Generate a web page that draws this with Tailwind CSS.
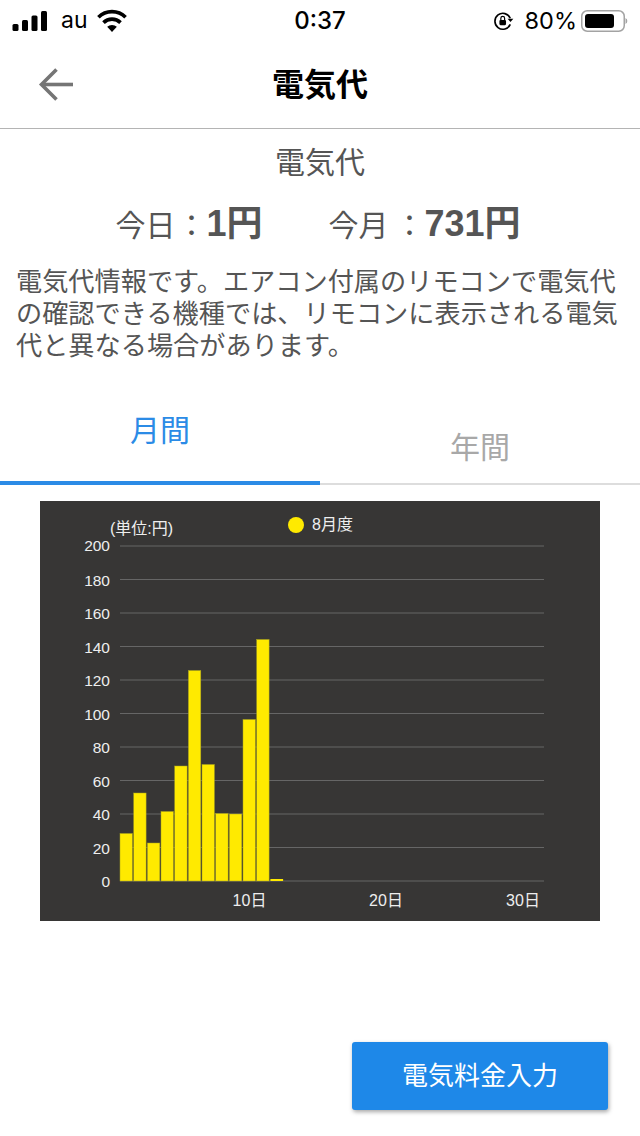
<!DOCTYPE html>
<html lang="ja">
<head>
  <meta charset="UTF-8">
  <meta name="viewport" content="width=device-width, initial-scale=1.0">
  <title>電気代</title>
  <script src="https://cdn.jsdelivr.net/npm/@tailwindcss/browser@4"></script>
</head>
<body class="bg-white font-['Liberation_Sans','Noto_Sans_CJK_JP',sans-serif]">
  <div class="w-[640px] h-[1136px] flex flex-col overflow-hidden relative">
    <!-- status bar -->
    <div class="h-[40px] pt-[1px] flex items-center justify-between pl-[12px] pr-[12px] text-black font-['Inter','Noto_Sans_CJK_JP',sans-serif]">
      <div class="w-[200px] flex items-center">
        <svg width="36" height="22" viewBox="0 0 36 22" fill="#000">
          <rect x="0.5" y="14" width="6" height="7" rx="1.5"/>
          <rect x="10" y="10" width="6" height="11" rx="1.5"/>
          <rect x="19.5" y="5.5" width="6" height="15.5" rx="1.5"/>
          <rect x="29" y="1" width="6" height="20" rx="1.5"/>
        </svg>
        <span class="ml-[13px] text-[23px] leading-none">au</span>
        <svg class="ml-[9px]" width="30" height="23" viewBox="0 0 26 20" fill="none" stroke="#000" stroke-width="3.2">
          <path d="M1.2 7.2a16.8 16.8 0 0 1 23.6 0"/>
          <path d="M5.6 11.8a10.6 10.6 0 0 1 14.8 0"/>
          <path d="M13 20l-4.2-4.5a6.2 6.2 0 0 1 8.4 0z" fill="#000" stroke="none"/>
        </svg>
      </div>
      <span class="text-[24px] font-medium leading-none">0:37</span>
      <div class="w-[200px] flex items-center justify-end">
        <svg width="21" height="20" viewBox="0 0 19 18" fill="none" stroke="#000" stroke-width="1.5">
          <path d="M15.6 6.5A7.2 7.2 0 1 0 15.6 12"/>
          <path d="M18.4 7l-2.6 3-2.6-3z" fill="#000" stroke="none"/>
          <rect x="5.8" y="8" width="6" height="4.8" rx="1" fill="#000" stroke="none"/>
          <path d="M7.1 8V6.6a1.7 1.7 0 0 1 3.4 0V8" stroke-width="1.1"/>
        </svg>
        <span class="ml-[11px] text-[23.5px] leading-none">80%</span>
        <svg class="ml-[4px]" width="47" height="22" viewBox="0 0 47 22" fill="none">
          <rect x="0.75" y="0.75" width="42.5" height="20.5" rx="5.5" stroke="#a3a3a3" stroke-width="1.5"/>
          <rect x="4" y="4" width="29" height="14" rx="3" fill="#000"/>
          <path d="M44.5 8v6a3 3 0 0 0 1.8-3a3 3 0 0 0-1.8-3z" fill="#a3a3a3"/>
        </svg>
      </div>
    </div>

    <!-- header -->
    <div class="h-[89px] border-b border-[#b4b4b4] flex items-center justify-center relative">
      <svg class="absolute left-[38px] top-[27px]" width="36" height="36" viewBox="0 0 36 36" fill="none" stroke="#757575" stroke-width="3.6">
        <path d="M35 17.5H5"/>
        <path d="M18.5 2.5L3.5 17.5l15 15"/>
      </svg>
      <h1 class="text-[32px] font-bold text-black leading-none mt-[2px]">電気代</h1>
    </div>

    <!-- summary -->
    <p class="text-center text-[30px] leading-none text-[#555555] mt-[19px]">電気代</p>
    <div class="flex justify-center items-baseline mt-[28px] pr-[4px] text-[#555555] h-[43px]">
      <span class="text-[30px] leading-none">今日</span>
      <span class="text-[30px] leading-none ml-[1px]">：</span>
      <span class="text-[36px] font-bold leading-none">1円</span>
      <span class="text-[30px] leading-none ml-[66px]">今月</span>
      <span class="text-[30px] leading-none ml-[6px]">：</span>
      <span class="text-[36px] font-bold leading-none">731円</span>
    </div>
    <p class="text-[26.2px] leading-[32px] text-[#555555] px-[16px] mt-[17px]">電気代情報です。エアコン付属のリモコンで電気代の確認できる機種では、リモコンに表示される電気代と異なる場合があります。</p>

    <!-- tabs -->
    <div class="flex h-[122px] border-b-2 border-[#dddddd] mt-[1px]">
      <div class="w-[320px] h-[122px] border-b-4 border-[#2b8be6] flex justify-center pt-[53px] text-[30px] leading-none text-[#2b8be6]">月間</div>
      <div class="w-[320px] flex justify-center pt-[70px] text-[30px] leading-none text-[#a8a8a8]">年間</div>
    </div>

    <!-- chart -->
    <div class="ml-[40px] mt-[16px] w-[560px] h-[420px] bg-[#373635]">
      <svg width="560" height="420" viewBox="40 501 560 420" font-family="'Liberation Sans','Noto Sans CJK JP',sans-serif" font-size="16" fill="#eeeeee">
        <text x="110" y="534">(単位:円)</text>
        <circle cx="296" cy="525" r="8" fill="#ffea00"/>
        <text x="312" y="530">8月度</text>
        <g stroke="#666666" stroke-width="1.2">
          <line x1="120" x2="544" y1="546" y2="546"/>
          <line x1="120" x2="544" y1="579.5" y2="579.5"/>
          <line x1="120" x2="544" y1="613" y2="613"/>
          <line x1="120" x2="544" y1="646.5" y2="646.5"/>
          <line x1="120" x2="544" y1="680" y2="680"/>
          <line x1="120" x2="544" y1="713.5" y2="713.5"/>
          <line x1="120" x2="544" y1="747" y2="747"/>
          <line x1="120" x2="544" y1="780.5" y2="780.5"/>
          <line x1="120" x2="544" y1="814" y2="814"/>
          <line x1="120" x2="544" y1="847.5" y2="847.5"/>
          <line x1="120" x2="544" y1="881" y2="881"/>
        </g>
        <g text-anchor="end" font-size="15.5">
          <text x="110" y="551">200</text>
          <text x="110" y="586">180</text>
          <text x="110" y="619">160</text>
          <text x="110" y="653">140</text>
          <text x="110" y="686">120</text>
          <text x="110" y="720">100</text>
          <text x="110" y="753">80</text>
          <text x="110" y="787">60</text>
          <text x="110" y="820">40</text>
          <text x="110" y="854">20</text>
          <text x="110" y="887">0</text>
        </g>
        <g fill="#ffea00" stroke="#a8a21f" stroke-width="0.5">
          <rect x="120" y="833.5" width="12.4" height="47.5"/>
          <rect x="133.7" y="793" width="12.4" height="88"/>
          <rect x="147.4" y="843" width="12.4" height="38"/>
          <rect x="161" y="811.5" width="12.4" height="69.5"/>
          <rect x="174.7" y="766" width="12.4" height="115"/>
          <rect x="188.4" y="670.5" width="12.4" height="210.5"/>
          <rect x="202" y="764.5" width="12.4" height="116.5"/>
          <rect x="215.7" y="813.5" width="12.4" height="67.5"/>
          <rect x="229.4" y="814" width="12.4" height="67"/>
          <rect x="243" y="719.5" width="12.4" height="161.5"/>
          <rect x="256.7" y="639.5" width="12.4" height="241.5"/>
        </g>
        <rect x="270.4" y="879" width="12.7" height="2" fill="#ffea00"/>
        <g text-anchor="middle">
          <text x="249.5" y="906">10日</text>
          <text x="386" y="906">20日</text>
          <text x="523" y="906">30日</text>
        </g>
      </svg>
    </div>

    <!-- input button -->
    <div class="flex justify-end pr-[32px] mt-[121px]">
      <button class="w-[256px] h-[68px] bg-[#1e88e8] text-white text-[26px] rounded-[3px] shadow-[1px_2px_4px_rgba(0,0,0,0.35)]">電気料金入力</button>
    </div>
  </div>
</body>
</html>
